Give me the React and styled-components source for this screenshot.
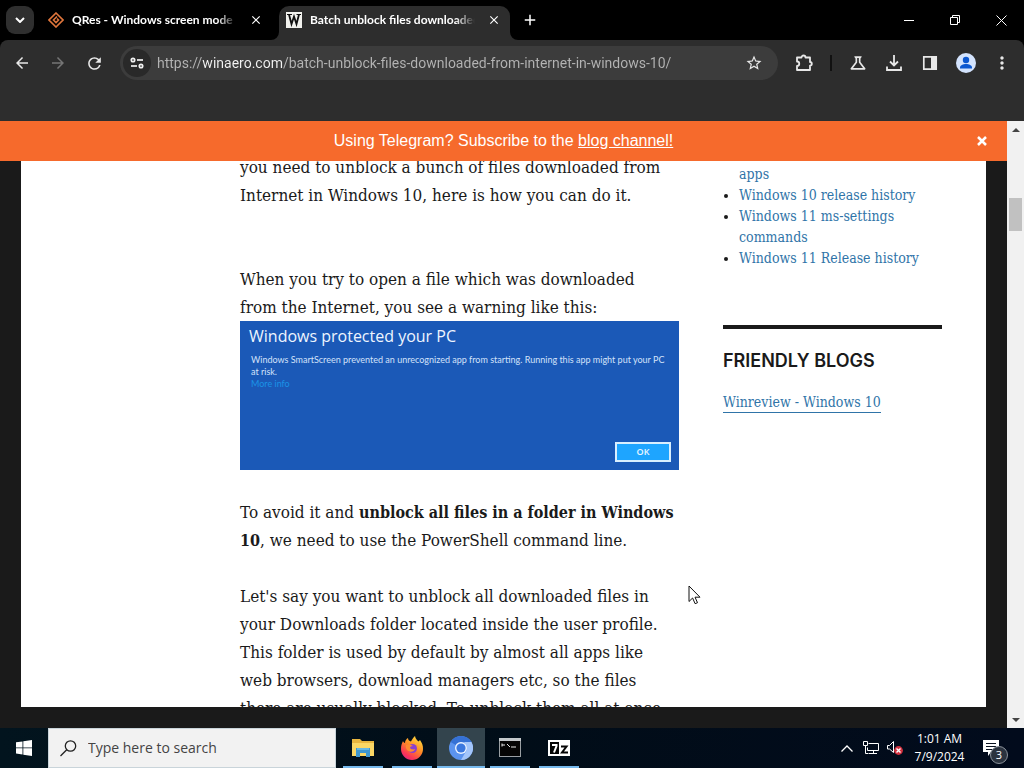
import React from "react";
import styled, { createGlobalStyle } from "styled-components";
import {
  MdArrowBack,
  MdArrowForward,
  MdRefresh,
  MdStarOutline,
  MdOutlineScience,
  MdMoreVert,
  MdClose,
  MdAdd,
} from "react-icons/md";

const GlobalStyle = createGlobalStyle`
  * { box-sizing: border-box; }
  body { margin: 0; background: #000; overflow: hidden; }
  button { border: 0; padding: 0; background: none; color: inherit; font: inherit; cursor: default; }
  svg { display: block; flex: none; }
`;

const ui = `"Open Sans", "Noto Sans", sans-serif`;
const compactUi = `Lato, "Open Sans", sans-serif`;
const serif = `"DejaVu Serif Condensed", "DejaVu Serif", serif`;

const Desktop = styled.div`
  display: flex;
  flex-direction: column;
  height: 100vh;
  font-family: ${ui};
  position: relative;
`;

/* Tab strip */
const TabStrip = styled.header`
  display: flex;
  height: 40px;
  background: #000;
  color: #fff;
  padding-left: 6px;
`;

const TabSearch = styled.button`
  width: 28px;
  height: 28px;
  margin-top: 6px;
  margin-right: 7px;
  border-radius: 9px;
  background: #2f2f2f;
  display: grid;
  place-items: center;
`;

const Tab = styled.div`
  position: relative;
  display: flex;
  align-items: center;
  width: 231px;
  margin-top: 6px;
  margin-right: 7px;
  padding: 0 8px 6px 7px;
  border-radius: 10px 10px 0 0;
  background: ${(p) => (p.$active ? "#2d2d2d" : "transparent")};
`;

const Flare = styled.svg`
  position: absolute;
  bottom: 0;
  ${(p) => (p.$right ? "left: 100%;" : "right: 100%;")}
`;

const TabTitle = styled.span`
  flex: 1;
  margin: 0 11px 0 8px;
  overflow: hidden;
  white-space: nowrap;
  font-family: ${compactUi};
  font-size: 12px;
  font-weight: 700;
  line-height: 20px;
  mask-image: linear-gradient(90deg, #000 88%, transparent 100%);
`;

const TabClose = styled.button`
  width: 16px;
  height: 16px;
  display: grid;
  place-items: center;
`;

const NewTab = styled.button`
  width: 26px;
  height: 40px;
  display: grid;
  place-items: center;
`;

const WindowControls = styled.div`
  display: flex;
  margin-left: auto;
`;

const WindowButton = styled.button`
  width: 46px;
  height: 40px;
  display: grid;
  place-items: center;
`;

/* Toolbar */
const ToolbarArea = styled.div`
  background: #2d2d2d;
  border-radius: 8px 8px 0 0;
  height: 81px;
  flex: none;
`;

const Toolbar = styled.nav`
  display: flex;
  align-items: center;
  height: 46px;
  padding: 0 4px;
  color: #e3e3e3;
`;

const IconButton = styled.button`
  width: 36px;
  height: 36px;
  display: grid;
  place-items: center;
  color: ${(p) => (p.$dim ? "#757575" : "#e8e8e8")};
`;

const Omnibox = styled.form`
  flex: 1;
  display: flex;
  align-items: center;
  height: 34px;
  margin: 0 8px;
  padding: 0 6px 0 3px;
  border-radius: 17px;
  background: #3c3c3c;
`;

const SiteInfo = styled.button`
  width: 28px;
  height: 28px;
  border-radius: 50%;
  background: #292929;
  display: grid;
  place-items: center;
  color: #f1f1f1;
`;

const Address = styled.input`
  flex: 1;
  min-width: 0;
  margin-left: 6px;
  padding: 0;
  border: 0;
  outline: 0;
  font-family: Roboto, sans-serif;
  font-size: 14px;
  line-height: 24px;
  color: #b4b4b4;
  -webkit-text-fill-color: transparent;
  background: linear-gradient(90deg, #b4b4b4 0 45px, #f4f4f4 45px 126px, #b4b4b4 126px);
  -webkit-background-clip: text;
  background-clip: text;
`;

const Separator = styled.span`
  width: 2px;
  height: 16px;
  margin: 0 8px;
  background: #111;
`;

/* Page */
const Page = styled.div`
  flex: 1;
  min-height: 0;
  display: flex;
`;

const Site = styled.div`
  flex: 1;
  min-width: 0;
  display: flex;
  flex-direction: column;
  background: #1a1a1a;
`;

const Banner = styled.div`
  flex: none;
  display: grid;
  grid-template-columns: 50px 1fr 50px;
  align-items: center;
  justify-items: center;
  height: 40px;
  background: #f66a2c;
  color: #fff;
  font: 16px/24px "Liberation Sans", Arial, sans-serif;
  a { color: inherit; }
`;

const Sheet = styled.main`
  flex: 1;
  min-height: 0;
  margin: 0 21px 21px;
  background: #fff;
  overflow: hidden;
`;

const Columns = styled.div`
  display: grid;
  grid-template-columns: minmax(0, 439fr) minmax(0, 219fr);
  column-gap: 44px;
  margin-top: -8px;
  padding: 0 44px 0 219px;
`;

const Article = styled.article`
  color: #1a1a1a;
  font-family: ${serif};
  font-size: 17px;
  line-height: 28px;
  white-space: nowrap;
  p { margin: 0 0 28px; }
  p.intro { margin-bottom: 56px; }
  p.lead { margin: 0; }
  strong { font-size: 16px; line-height: 20px; }
`;

const WarningShot = styled.section`
  display: flex;
  flex-direction: column;
  height: 149px;
  margin-bottom: 28px;
  padding: 3px 8px 8px 9px;
  background: #1b59b7;
  color: #eef5ff;
  font-family: ${ui};
  white-space: normal;
`;

const WarningTitle = styled.h2`
  margin: 0;
  font-size: 16px;
  line-height: 24px;
  font-weight: 400;
`;

const WarningText = styled.p`
  && { margin: 6px 0 0 2px; }
  font-family: ${compactUi};
  font-size: 9px;
  line-height: 12px;
  color: #d3e2fa;
  white-space: nowrap;
  a { color: #1a93e6; text-decoration: none; }
`;

const OkButton = styled.button`
  align-self: flex-end;
  margin-top: auto;
  width: 56px;
  height: 20px;
  border: 2px solid #d9efff;
  background: #1ea5ff;
  color: #e8f6ff;
  font-size: 9px;
  font-weight: 600;
  line-height: 16px;
`;

const Sidebar = styled.aside`
  padding-top: 11px;
  font-family: ${serif};
  font-size: 14px;
  line-height: 21px;
  color: #1a1a1a;
  white-space: nowrap;
  a { color: #2f74a8; text-decoration: none; }
`;

const LinkList = styled.ul`
  margin: 0 0 56px;
  padding-left: 16px;
`;

const ContinuedItem = styled.li`
  list-style: none;
`;

const Widget = styled.section`
  border-top: 4px solid #1a1a1a;
  padding-top: 21px;
`;

const WidgetTitle = styled.h2`
  margin: 0 0 21px;
  font: 600 18px/21px Inter, sans-serif;
`;

const BlogLink = styled.a`
  display: inline-block;
  border-bottom: 1px solid #2f74a8;
  line-height: 19px;
`;

const Scrollbar = styled.div`
  width: 17px;
  display: flex;
  flex-direction: column;
  align-items: center;
  background: #f1f1f1;
`;

const ScrollArrow = styled.button`
  width: 17px;
  height: 17px;
  display: grid;
  place-items: center;
`;

const Track = styled.div`
  flex: ${(p) => p.$grow} 1 0;
  width: 13px;
  background: ${(p) => (p.$thumb ? "#c1c1c1" : "transparent")};
`;

/* Taskbar */
const Taskbar = styled.footer`
  flex: none;
  display: flex;
  height: 40px;
  background: linear-gradient(90deg, #02141e, #010d18 50%, #020b1c);
  color: #fff;
`;

const StartButton = styled.button`
  width: 48px;
  display: grid;
  place-items: center;
`;

const SearchBox = styled.label`
  display: flex;
  align-items: center;
  width: 288px;
  margin-right: 3px;
  padding-left: 11px;
  background: #f2f2f2;
  border: 1px solid #c9d4da;
  color: #222;
`;

const SearchInput = styled.input`
  flex: 1;
  min-width: 0;
  margin-left: 11px;
  padding: 0;
  border: 0;
  outline: 0;
  background: none;
  font-family: ${ui};
  font-size: 14px;
  line-height: 24px;
  &::placeholder { color: #444; opacity: 1; }
`;

const TaskButton = styled.button`
  width: 48px;
  margin-right: 1px;
  display: flex;
  flex-direction: column;
  align-items: center;
  justify-content: space-between;
  padding-top: 8px;
  background: ${(p) => (p.$active ? "#33444d" : "transparent")};
  &::after {
    content: "";
    width: ${(p) => (p.$active ? "48px" : "40px")};
    height: 2px;
    background: #76b9ed;
  }
`;

const Tray = styled.div`
  display: flex;
  align-items: center;
  margin-left: auto;
`;

const TrayButton = styled.button`
  width: 24px;
  height: 40px;
  display: grid;
  place-items: center;
`;

const Clock = styled.time`
  width: 65px;
  text-align: center;
  font-size: 12px;
  line-height: 18px;
`;

const Notifications = styled.button`
  width: 48px;
  height: 40px;
  display: grid;
  place-items: center;
  position: relative;
  margin-right: 4px;
  padding-right: 10px;
`;

const Badge = styled.span`
  position: absolute;
  right: 12px;
  bottom: 4px;
  width: 18px;
  height: 18px;
  border: 1px solid #8b929b;
  border-radius: 50%;
  background: #2b333f;
  font-size: 11px;
  line-height: 16px;
`;

const Pointer = styled.svg`
  position: absolute;
  left: 688px;
  top: 585px;
`;

const AppIcon = ({ children }) => (
  <svg width="24" height="24" viewBox="0 0 24 24" aria-hidden="true">
    {children}
  </svg>
);

const GitFavicon = () => (
  <svg width="16" height="16" viewBox="0 0 16 16" fill="none" stroke="#e0763c" strokeWidth="1.6">
    <path d="M8 1 15 8 8 15 1 8Z" />
    <path d="M9 4.500 5.500 8 8 10.500 10.500 8 9 6.500" />
  </svg>
);

const WFavicon = () => (
  <svg width="16" height="16" viewBox="0 0 16 16">
    <rect width="16" height="16" fill="#f2f2ee" />
    <path d="M1 2.500h5M10.500 2.500H15" fill="none" stroke="#111" strokeWidth="1" />
    <path d="M3 2.500 5.500 12 8 4.500 10.500 12 13 2.500" fill="none" stroke="#111" strokeWidth="1.800" />
  </svg>
);

function TaskButtons() {
  return (
    <>
      <TaskButton aria-label="File Explorer">
        <AppIcon>
          <path d="M1 3h8l2 2h12v15H1Z" fill="#e9b63f" />
          <path d="M1 7h22v13H1Z" fill="#fbd765" />
          <path d="M5 12h14v9h-4v-4H9v4H5Z" fill="#3f97cf" />
          <path d="M6 12h12v2H6Z" fill="#67b8e4" />
        </AppIcon>
      </TaskButton>
      <TaskButton aria-label="Firefox">
        <AppIcon>
          <defs>
            <linearGradient id="fire" x1="0.8" y1="0" x2="0.2" y2="1">
              <stop offset="0" stopColor="#ffe23e" />
              <stop offset="0.45" stopColor="#ff8a26" />
              <stop offset="0.8" stopColor="#fb3556" />
              <stop offset="1" stopColor="#e02685" />
            </linearGradient>
          </defs>
          <path d="M3 5c.4 1 1 1.600 2 2C5 4.500 6.500 3 8 2c0 2 1 3 3 3.500C12.500 3 13 1.500 15 0c.5 3 2 4 3.500 5.500L20 4c2 3 3.200 5.500 3 9a11 11 0 0 1-22 0c0-3 .7-5.500 2-8Z" fill="url(#fire)" />
          <circle cx="12.500" cy="12.500" r="4.500" fill="#8a3fd0" />
          <path d="M6 9c3-1 5-.5 7 1-2 0-3 .8-3 2 2 2 4 1.500 5 1-1 3-5 4-8 1-1-1.500-1.500-3-1-5Z" fill="#ff8b30" />
        </AppIcon>
      </TaskButton>
      <TaskButton $active aria-label="Chromium">
        <AppIcon>
          <circle cx="12" cy="12" r="12" fill="#5b93ee" />
          <path d="M12 0a12 12 0 0 1 10.400 6H12a6 6 0 0 0-5.200 3L1.600 6A12 12 0 0 1 12 0Z" fill="#3571d5" />
          <path d="M22.400 6A12 12 0 0 1 12 24l5.200-9A6 6 0 0 0 17 8.700L15 6Z" fill="#a3c5fa" />
          <circle cx="12" cy="12" r="6" fill="#eaf2ff" />
          <circle cx="12" cy="12" r="4.600" fill="#3b78df" />
        </AppIcon>
      </TaskButton>
      <TaskButton aria-label="Command Prompt">
        <AppIcon>
          <rect x="1.500" y="2.500" width="21" height="18" fill="#050505" stroke="#9a9fa3" />
          <path d="M1 2h22v3H1Z" fill="#c4c8cb" />
          <path d="M4 9h3M4 7.500v3M9 8l3 3M13 11h5" stroke="#e8e8e8" fill="none" />
        </AppIcon>
      </TaskButton>
      <TaskButton aria-label="7-Zip">
        <AppIcon>
          <rect x="1" y="4" width="22" height="16" fill="#fff" />
          <rect x="3" y="6" width="9" height="12" fill="#050505" />
          <path d="M5 9h4.500v1L7 16.500" fill="none" stroke="#fff" strokeWidth="2" />
          <path d="M14 10.500h5.500l-4.500 6H21" fill="none" stroke="#050505" strokeWidth="2" />
        </AppIcon>
      </TaskButton>
    </>
  );
}

export default function App() {
  return (
    <Desktop>
      <GlobalStyle />
      <TabStrip>
        <TabSearch aria-label="Search tabs">
          <svg width="10" height="6" viewBox="0 0 10 6" fill="none" stroke="#fff" strokeWidth="2">
            <path d="m1 1 4 4 4-4" />
          </svg>
        </TabSearch>
        <Tab>
          <GitFavicon />
          <TabTitle>QRes - Windows screen mode</TabTitle>
          <TabClose aria-label="Close tab"><MdClose size={14} /></TabClose>
        </Tab>
        <Tab $active>
          <Flare width="8" height="8" viewBox="0 0 8 8"><path d="M8 0v8H0a8 8 0 0 0 8-8Z" fill="#2d2d2d" /></Flare>
          <WFavicon />
          <TabTitle>Batch unblock files downloaded</TabTitle>
          <TabClose aria-label="Close tab"><MdClose size={14} /></TabClose>
          <Flare $right width="8" height="8" viewBox="0 0 8 8"><path d="M0 0v8h8a8 8 0 0 1-8-8Z" fill="#2d2d2d" /></Flare>
        </Tab>
        <NewTab aria-label="New tab"><MdAdd size={18} /></NewTab>
        <WindowControls>
          <WindowButton aria-label="Minimize">
            <svg width="10" height="10" stroke="#fff"><path d="M0 5.500h10" /></svg>
          </WindowButton>
          <WindowButton aria-label="Restore">
            <svg width="10" height="10" fill="none" stroke="#fff"><path d="M.5 2.500h7v7h-7ZM2.500 2.500v-2h7v7h-2" /></svg>
          </WindowButton>
          <WindowButton aria-label="Close">
            <svg width="11" height="11" stroke="#fff"><path d="m.5.5 10 10M10.500.5l-10 10" /></svg>
          </WindowButton>
        </WindowControls>
      </TabStrip>

      <ToolbarArea>
        <Toolbar>
          <IconButton aria-label="Back"><MdArrowBack size={18} /></IconButton>
          <IconButton $dim aria-label="Forward"><MdArrowForward size={18} /></IconButton>
          <IconButton aria-label="Reload"><MdRefresh size={19} /></IconButton>
          <Omnibox onSubmit={(e) => e.preventDefault()}>
            <SiteInfo type="button" aria-label="Site information">
              <svg width="14" height="12" viewBox="0 0 14 12" fill="none" stroke="currentColor" strokeWidth="1.700">
                <circle cx="3" cy="3" r="1.700" /><path d="M7 3h6" />
                <circle cx="11" cy="9" r="1.700" /><path d="M1 9h6" />
              </svg>
            </SiteInfo>
            <Address
              aria-label="Address"
              defaultValue="https://winaero.com/batch-unblock-files-downloaded-from-internet-in-windows-10/"
            />
            <IconButton type="button" aria-label="Bookmark this page"><MdStarOutline size={18} /></IconButton>
          </Omnibox>
          <IconButton aria-label="Extensions">
            <svg width="18" height="18" viewBox="0 0 18 18" fill="none" stroke="currentColor" strokeWidth="1.800" strokeLinejoin="round">
              <path d="M2 3.500h4.500a2 2 0 0 1 4 0H15v4.500a1.800 1.800 0 0 1 0 3.600V16H2v-4a2.200 2.200 0 0 0 0-4.500Z" />
            </svg>
          </IconButton>
          <Separator />
          <IconButton aria-label="Experiments"><MdOutlineScience size={20} /></IconButton>
          <IconButton aria-label="Downloads">
            <svg width="18" height="18" viewBox="0 0 18 18" fill="none" stroke="currentColor" strokeWidth="1.800">
              <path d="M9 1v10M5 7.500l4 4 4-4M2 12.500V16h14v-3.500" />
            </svg>
          </IconButton>
          <IconButton aria-label="Side panel">
            <svg width="16" height="16" viewBox="0 0 16 16">
              <path d="M1.800 1.800h12.400v12.400H1.800Z" fill="none" stroke="currentColor" strokeWidth="1.700" />
              <path d="M9 2h5v12H9Z" fill="currentColor" />
            </svg>
          </IconButton>
          <IconButton aria-label="Profile">
            <svg width="20" height="20" viewBox="0 0 20 20">
              <circle cx="10" cy="10" r="10" fill="#d3e3fd" />
              <circle cx="10" cy="7" r="3.200" fill="#0b57d0" />
              <path d="M4 15.500v-1c0-2 3-3.500 6-3.500s6 1.500 6 3.500v1Z" fill="#0b57d0" />
            </svg>
          </IconButton>
          <IconButton aria-label="Menu"><MdMoreVert size={20} /></IconButton>
        </Toolbar>
      </ToolbarArea>

      <Page>
        <Site>
          <Banner>
            <span />
            <span>Using Telegram? Subscribe to the <a href="#channel">blog channel!</a></span>
            <button aria-label="Dismiss">
              <svg width="10" height="10" stroke="#fff" strokeWidth="2.500"><path d="m1 1 8 8M9 1 1 9" /></svg>
            </button>
          </Banner>
          <Sheet>
            <Columns>
              <Article>
                <p className="intro">
                  you need to unblock a bunch of files downloaded from<br />
                  Internet in Windows 10, here is how you can do it.
                </p>
                <p className="lead">
                  When you try to open a file which was downloaded<br />
                  from the Internet, you see a warning like this:
                </p>
                <WarningShot>
                  <WarningTitle>Windows protected your PC</WarningTitle>
                  <WarningText>
                    Windows SmartScreen prevented an unrecognized app from starting. Running this app might put your PC<br />
                    at risk.<br />
                    <a href="#info">More info</a>
                  </WarningText>
                  <OkButton>OK</OkButton>
                </WarningShot>
                <p>
                  To avoid it and <strong>unblock all files in a folder in Windows<br />
                  10</strong>, we need to use the PowerShell command line.
                </p>
                <p>
                  Let's say you want to unblock all downloaded files in<br />
                  your Downloads folder located inside the user profile.<br />
                  This folder is used by default by almost all apps like<br />
                  web browsers, download managers etc, so the files<br />
                  there are usually blocked. To unblock them all at once
                </p>
              </Article>
              <Sidebar>
                <LinkList>
                  <ContinuedItem><a href="#apps">apps</a></ContinuedItem>
                  <li><a href="#w10">Windows 10 release history</a></li>
                  <li><a href="#settings">Windows 11 ms-settings<br />commands</a></li>
                  <li><a href="#w11">Windows 11 Release history</a></li>
                </LinkList>
                <Widget>
                  <WidgetTitle>FRIENDLY BLOGS</WidgetTitle>
                  <BlogLink href="#winreview">Winreview - Windows 10</BlogLink>
                </Widget>
              </Sidebar>
            </Columns>
          </Sheet>
        </Site>
        <Scrollbar>
          <ScrollArrow aria-label="Scroll up"><svg width="8" height="4"><path d="M0 4 4 0l4 4Z" fill="#444" /></svg></ScrollArrow>
          <Track $grow={60} />
          <Track $grow={33} $thumb />
          <Track $grow={480} />
          <ScrollArrow aria-label="Scroll down"><svg width="8" height="4"><path d="m0 0 4 4 4-4Z" fill="#444" /></svg></ScrollArrow>
        </Scrollbar>
      </Page>

      <Taskbar>
        <StartButton aria-label="Start">
          <svg width="16" height="16" viewBox="0 0 16 16" fill="#fff">
            <path d="M0 2.300 6.500 1.400v6.100H0ZM7.300 1.300 16 0v7.500H7.300ZM0 8.300h6.500v6.200L0 13.600ZM7.300 8.300H16V16l-8.700-1.300Z" />
          </svg>
        </StartButton>
        <SearchBox>
          <svg width="17" height="17" viewBox="0 0 17 17" fill="none" stroke="#222" strokeWidth="1.300">
            <circle cx="10.500" cy="6" r="5.200" /><path d="M6.700 9.800.5 16" />
          </svg>
          <SearchInput aria-label="Search" placeholder="Type here to search" />
        </SearchBox>
        <TaskButtons />
        <Tray>
          <TrayButton aria-label="Show hidden icons">
            <svg width="12" height="7" fill="none" stroke="#fff" strokeWidth="1.300"><path d="m.5 6.500 5.500-5.500 5.500 5.500" /></svg>
          </TrayButton>
          <TrayButton aria-label="Network">
            <svg width="17" height="14" fill="none" stroke="#fff"><path d="M5.500 2.500h10v7h-11v-3M10.500 9.500v3M6 12.500h8M.5.500h4v4h-4ZM2.500 4.500v8h3" /></svg>
          </TrayButton>
          <TrayButton aria-label="Volume muted">
            <svg width="16" height="14" viewBox="0 0 16 14">
              <path d="M.5 4.500h2l4-4v11l-4-3.500h-2Z" fill="none" stroke="#fff" />
              <circle cx="11.500" cy="9.500" r="4.400" fill="#d3313f" />
              <path d="m9.500 7.500 4 4M13.500 7.500l-4 4" stroke="#fff" strokeWidth="1.400" />
            </svg>
          </TrayButton>
          <Clock>1:01 AM<br />7/9/2024</Clock>
          <Notifications aria-label="Notifications">
            <svg width="16" height="16" viewBox="0 0 16 16">
              <path d="M0 0h16v12H8l-3 4v-4H0Z" fill="#fff" />
              <path d="M3 3.500h10M3 6.500h10M3 9.500h7" stroke="#0a1220" />
            </svg>
            <Badge>3</Badge>
          </Notifications>
        </Tray>
      </Taskbar>
      <Pointer width="13" height="20" viewBox="0 0 13 20">
        <path d="M1 1v15.500l3.600-3.500 2.500 5.700 2.400-1-2.500-5.500H12Z" fill="#fff" stroke="#111" />
      </Pointer>
    </Desktop>
  );
}
